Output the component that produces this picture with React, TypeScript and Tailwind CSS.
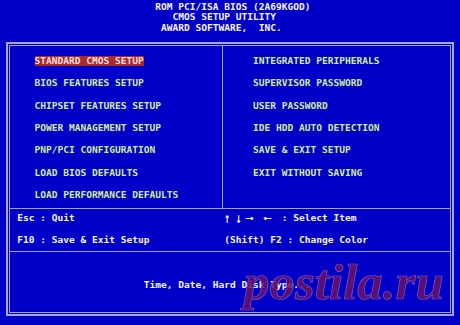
// Award BIOS setup main screen: 80x30 text grid scaled to 460x325
// (one cell is 5.75px wide), drawn with a monospace face at the same pitch.
const leftMenu = [
  "STANDARD CMOS SETUP",
  "BIOS FEATURES SETUP",
  "CHIPSET FEATURES SETUP",
  "POWER MANAGEMENT SETUP",
  "PNP/PCI CONFIGURATION",
  "LOAD BIOS DEFAULTS",
  "LOAD PERFORMANCE DEFAULTS",
];

const rightMenu = [
  "INTEGRATED PERIPHERALS",
  "SUPERVISOR PASSWORD",
  "USER PASSWORD",
  "IDE HDD AUTO DETECTION",
  "SAVE & EXIT SETUP",
  "EXIT WITHOUT SAVING",
];

function MenuItem({ label, active }: { label: string; active?: boolean }) {
  return (
    <div className="h-[10px]">
      <span
        className={
          active
            ? "inline-block h-[10px] bg-[#a82a2e] text-[#f6dede]"
            : "inline-block h-[10px]"
        }
      >
        {label}
      </span>
    </div>
  );
}

export default function App() {
  return (
    <div className="relative h-[325px] w-[460px] overflow-hidden whitespace-pre bg-[#0000c8] font-['DejaVu_Sans_Mono','Liberation_Mono',monospace] text-[9.55px] font-bold">
      <header className="flex h-[42px] flex-col pt-[1.5px] leading-[10.8px] text-[#f4f4f8]">
        <div className="pl-[155.25px]">ROM PCI/ISA BIOS (2A69KGOD)</div>
        <div className="pl-[172.5px]">CMOS SETUP UTILITY</div>
        <div className="pl-[161px]">AWARD SOFTWARE,  INC.</div>
      </header>

      <div className="ml-[6px] h-[274px] w-[448px] border-2 border-[#a4a4f0] p-px">
        <div className="flex h-full flex-col border border-[#a4a4f0]">
          <div className="flex h-[162px] leading-[10px] text-[#cfeb9c]">
            <div className="flex w-[212px] flex-col gap-[12.43px] pl-[24.5px] pt-[9.8px]">
              {leftMenu.map((label, i) => (
                <MenuItem key={label} label={label} active={i === 0} />
              ))}
            </div>
            <div className="w-px bg-[#a4a4f0]" />
            <div className="flex flex-1 flex-col gap-[12.43px] pl-[30px] pt-[9.8px]">
              {rightMenu.map((label) => (
                <MenuItem key={label} label={label} />
              ))}
            </div>
          </div>

          <div className="h-px bg-[#a4a4f0]" />

          <div className="grid h-[42px] grid-cols-[213px_1fr] content-start gap-y-[12px] pt-[3.9px] leading-[10px] text-[#f4f4f8]">
            <div className="pl-[7.25px]">Esc : Quit</div>
            <div className="pl-[1.25px]">
              <span className="inline-block scale-y-150">↑</span> <span className="inline-block scale-y-150">↓</span> <span className="inline-block scale-x-150">→</span>  <span className="inline-block scale-x-150">←</span>  : Select Item
            </div>
            <div className="pl-[7.25px]">F10 : Save & Exit Setup</div>
            <div className="pl-[1.25px]">(Shift) F2 : Change Color</div>
          </div>

          <div className="h-px bg-[#a4a4f0]" />

          <div className="flex-1 pl-[133.75px] pt-[27.9px] leading-[10px] text-[#f4f4f8]">
            Time, Date, Hard Disk Type...
          </div>
        </div>
      </div>

      {/* site watermark laid over the status line */}
      <div className="absolute left-[244px] top-[257px] font-['Liberation_Serif',serif] text-[51px] leading-none font-bold italic text-[#6a1268] opacity-85 [-webkit-text-stroke:0.7px_#9a68b4]">
        postila.ru
      </div>
    </div>
  );
}
